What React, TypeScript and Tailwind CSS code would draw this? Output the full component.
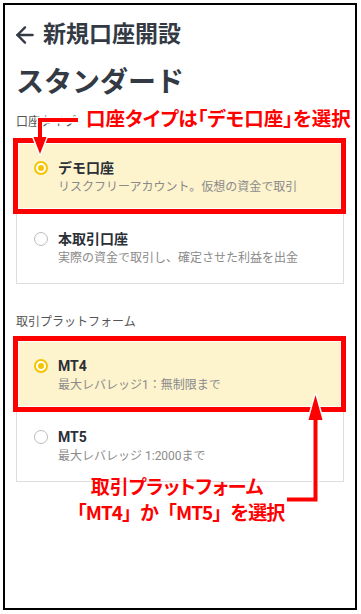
import React from "react";
import { ArrowLeft } from "lucide-react";

const FONT = { fontFamily: "Roboto, 'Noto Sans CJK JP', sans-serif" };

type Opt = { title: string; sub: string; selected?: boolean };

function Radio({ selected }: { selected?: boolean }) {
  if (selected) {
    return (
      <div className="mt-[3px] w-[14px] h-[14px] rounded-full border-2 border-[#f5c400] bg-white flex items-center justify-center shrink-0">
        <div className="w-[6px] h-[6px] rounded-full bg-[#f5c400]" />
      </div>
    );
  }
  return <div className="mt-[3px] w-[14px] h-[14px] rounded-full border border-[#bdbdbd] bg-white shrink-0" />;
}

function Row({ o, first }: { o: Opt; first?: boolean }) {
  return (
    <div
      className={
        "relative flex items-start gap-[10px] pl-[17px] pr-3 pt-[16px] pb-[16px] " +
        (first ? "" : "border-t border-[#dddddd] ") +
        (o.selected ? "bg-[#fdf3cd]" : "bg-white")
      }
    >
      <Radio selected={o.selected} />
      <div className="flex flex-col">
        <div className="text-[14px] leading-[20px] font-bold text-[#2b2f36]">{o.title}</div>
        <div className="text-[12px] leading-[18px] text-[#8a8a8a]">{o.sub}</div>
      </div>
      {o.selected && (
        <div className="absolute -top-[4px] -left-[4px] -right-[3px] -bottom-[2px] border-[5px] border-[#ff0000] shadow-[inset_0_0_0_1px_#ffffff] pointer-events-none z-10" />
      )}
    </div>
  );
}

function Group({ opts }: { opts: Opt[] }) {
  return (
    <div className="border border-[#dddddd]">
      {opts.map((o, i) => (
        <Row key={o.title} o={o} first={i === 0} />
      ))}
    </div>
  );
}

export default function App() {
  return (
    <div className="relative w-[361px] h-[614px] bg-white p-[3px]" style={FONT}>
      <div className="relative w-[354px] h-[607px] border-2 border-black">
        <div className="flex items-center gap-[5px] pl-[7px] pt-[14px] h-[46px]">
          <ArrowLeft size={26} strokeWidth={2.2} color="#333a44" />
          <div className="text-[23px] leading-[32px] font-bold text-[#333a44]">新規口座開設</div>
        </div>
        <div className="px-[11px]">
          <div className="mt-[14px] text-[28px] leading-[36px] font-bold text-[#333a44]">スタンダード</div>
          <div className="mt-[12px] mb-[10px] text-[12px] leading-[18px] text-[#555]">口座タイプ</div>
          <Group
            opts={[
              { title: "デモ口座", sub: "リスクフリーアカウント。仮想の資金で取引", selected: true },
              { title: "本取引口座", sub: "実際の資金で取引し、確定させた利益を出金" },
            ]}
          />
          <div className="mt-[29px] mb-[8px] text-[12px] leading-[18px] text-[#555]">取引プラットフォーム</div>
          <Group
            opts={[
              { title: "MT4", sub: "最大レバレッジ1：無制限まで", selected: true },
              { title: "MT5", sub: "最大レバレッジ 1:2000まで" },
            ]}
          />
        </div>
      </div>

      <svg className="absolute left-0 top-0 pointer-events-none z-20" width="361" height="614" viewBox="0 0 361 614">
        <g fill="none" stroke="#ffffff" strokeWidth="7" strokeLinejoin="miter">
          <polyline points="79,120 40,120 40,142" />
          <polyline points="287,499.5 315.5,499.5 315.5,416" />
        </g>
        <g fill="#ffffff" stroke="#ffffff" strokeWidth="3" strokeLinejoin="round">
          <polygon points="33.5,137 46.5,137 40,154" />
          <polygon points="308.5,420 322.5,420 315.5,395" />
        </g>
        <g fill="none" stroke="#ff0000" strokeWidth="4" strokeLinejoin="miter">
          <polyline points="78,120 40,120 40,142" />
          <polyline points="287,499.5 315.5,499.5 315.5,416" />
        </g>
        <g fill="#ff0000">
          <polygon points="33.5,137 46.5,137 40,154" />
          <polygon points="308.5,420 322.5,420 315.5,395" />
        </g>
      </svg>

      <div
        className="absolute left-[86px] top-[106px] z-30 text-[19.5px] leading-[24px] font-bold text-[#ff0000] whitespace-nowrap"
        style={{ fontFamily: "'Noto Sans CJK JP', sans-serif", fontFeatureSettings: '"palt"' }}
      >
        口座タイプは「デモ口座」を選択
      </div>
      <div
        className="absolute left-0 w-[356px] top-[473px] z-30 text-center text-[19px] leading-[26px] font-bold text-[#ff0000] whitespace-nowrap"
        style={{ fontFamily: "'Noto Sans CJK JP', sans-serif" }}
      >
        <div className="pr-[2px]" style={{ fontFeatureSettings: '"palt"' }}>取引プラットフォーム</div>
        <div className="tracking-[-1px] pr-[4px]">「MT4」か「MT5」を選択</div>
      </div>
    </div>
  );
}
